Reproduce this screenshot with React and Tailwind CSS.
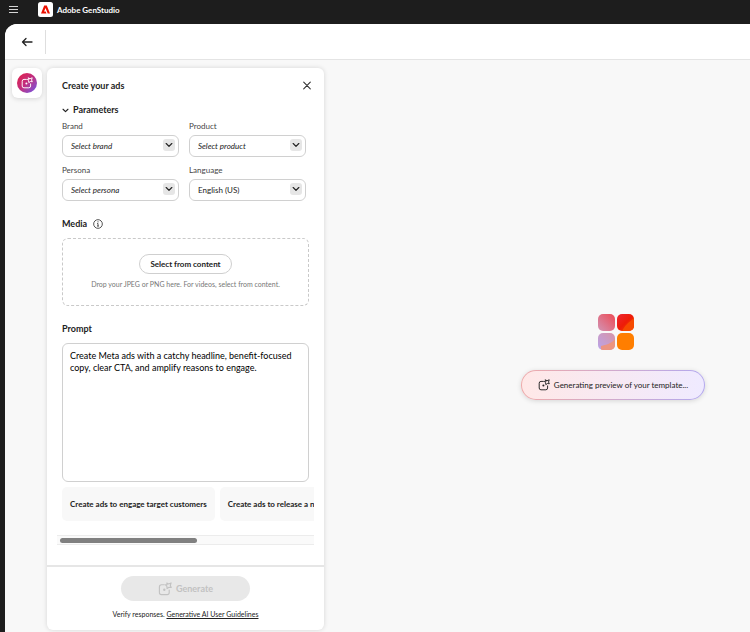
import React, { useState } from 'react';

function GenerateIcon({ className }) {
  return (
    <svg className={className} viewBox="0 0 20 20" fill="none" stroke="currentColor" strokeWidth="1.6" strokeLinecap="round" strokeLinejoin="round" aria-hidden="true">
      <path d="M9 4H5a3 3 0 0 0-3 3v8a3 3 0 0 0 3 3h8a3 3 0 0 0 3-3v-3.5" />
      <path d="M12.6 1.6l2.5 1.3 3.6-1.6-1.1 3.7 1.3 2.9-3.2-.4-2.7 1.9-.3-3.1-2.2-2.4 2.5-.1z" />
      <circle cx="9" cy="11" r="1.7" fill="currentColor" stroke="none" />
    </svg>
  );
}

function Chevron({ className }) {
  return (
    <svg className={className} viewBox="0 0 10 10" fill="none" stroke="currentColor" strokeWidth="1.6" strokeLinecap="round" strokeLinejoin="round" aria-hidden="true">
      <path d="M1.5 3.2L5 6.7l3.5-3.5" />
    </svg>
  );
}

const parameters = [
  { id: 'brand', label: 'Brand', options: ['Select brand'], placeholder: true },
  { id: 'product', label: 'Product', options: ['Select product'], placeholder: true },
  { id: 'persona', label: 'Persona', options: ['Select persona'], placeholder: true },
  { id: 'language', label: 'Language', options: ['English (US)'], placeholder: false }
];

const suggestions = [
  'Create ads to engage target customers',
  'Create ads to release a new product'
];

function ParameterSelect({ id, label, options, placeholder }) {
  return (
    <div>
      <label htmlFor={id} className="block text-[8px] leading-4 text-[#464646]">{label}</label>
      <div className="relative mt-px">
        <select
          id={id}
          className={`block w-full h-[22px] pl-2 pr-6 appearance-none rounded-md border border-[#d0d0d0] bg-white text-[8px] text-[#222] ${placeholder ? 'italic' : ''}`}
        >
          {options.map(option => <option key={option}>{option}</option>)}
        </select>
        <span className="absolute right-1 top-1 flex items-center justify-center size-3 rounded-[3px] bg-[#e6e6e6] text-[#292929] pointer-events-none">
          <Chevron className="size-2" />
        </span>
      </div>
    </div>
  );
}

function CreatePanel() {
  const [prompt, setPrompt] = useState(
    'Create Meta ads with a catchy headline, benefit-focused copy, clear CTA, and amplify reasons to engage.'
  );

  return (
    <section className="flex flex-col w-[277px] flex-none rounded-md bg-white shadow-[0_0_5px_rgba(0,0,0,0.14)]">
      <div className="flex-1 px-[15px] pt-2.5 pb-5">
        <div className="flex items-center justify-between">
          <h1 className="text-[9px] leading-4 font-bold">Create your ads</h1>
          <button type="button" aria-label="Close" className="-mr-1">
            <svg className="size-3" viewBox="0 0 12 12" fill="none" stroke="#333" strokeWidth="1.1" strokeLinecap="round">
              <path d="M2.7 2.2l6.6 6.6M9.3 2.2L2.7 8.8" />
            </svg>
          </button>
        </div>

        <button type="button" className="flex items-center gap-1 mt-2 text-[9px] leading-4 font-bold">
          <Chevron className="size-[7px]" />
          Parameters
        </button>

        <div className="grid grid-cols-2 gap-x-2.5 gap-y-[5px] mr-[3px]">
          {parameters.map(param => <ParameterSelect key={param.id} {...param} />)}
        </div>

        <div className="flex items-center gap-1.5 mt-[15px]">
          <h2 className="text-[9px] leading-4 font-bold">Media</h2>
          <svg className="size-2.5" viewBox="0 0 12 12" fill="none" stroke="#333" strokeWidth="1" aria-hidden="true">
            <circle cx="6" cy="6" r="5.2" />
            <path d="M5 5.4h1v3M4.8 8.5h2.4" />
            <circle cx="6" cy="3.4" r=".7" fill="#333" stroke="none" />
          </svg>
        </div>
        <div className="flex flex-col items-center mt-1.5 h-[68px] pt-[15px] rounded-md border border-dashed border-[#c9c9c9]">
          <button type="button" className="h-5 px-2.5 rounded-full border border-[#cfcfcf] text-[8px] leading-4 font-bold">
            Select from content
          </button>
          <p className="mt-1 text-[7px] leading-3 text-[#777]">Drop your JPEG or PNG here. For videos, select from content.</p>
        </div>

        <label htmlFor="prompt" className="block mt-[15px] text-[9px] leading-4 font-bold">Prompt</label>
        <textarea
          id="prompt"
          value={prompt}
          onChange={(e) => setPrompt(e.target.value)}
          className="block w-full h-[139px] mt-1.5 px-[7px] py-1.5 resize-none rounded-md border border-[#d0d0d0] text-[9px] leading-3 text-black"
        />

        <div className="-ml-[5px] -mr-[5px]">
          <div className="flex gap-[5px] pl-[5px] pt-[5px] overflow-hidden">
            {suggestions.map(text => (
              <button
                key={text}
                type="button"
                onClick={() => setPrompt(text)}
                className="flex-none h-[34px] px-2 rounded-[5px] bg-[#f8f8f8] text-[8px] leading-4 font-bold whitespace-nowrap"
              >
                {text}
              </button>
            ))}
          </div>
          <div className="flex items-center h-2.5 mt-3.5 px-[3px] border-y border-[#ececec] bg-[#fafafa]">
            <div className="w-[137px] h-[5px] rounded-full bg-[#808080]"></div>
          </div>
        </div>
      </div>

      <div className="flex flex-col items-center border-t-2 border-[#e6e6e6] pt-[9px] pb-2">
        <button type="button" disabled className="flex items-center justify-center gap-1 w-[129px] h-[25px] rounded-full bg-[#e8e8e8] text-[9px] font-bold text-[#c2c2c2]">
          <GenerateIcon className="size-3.5" />
          Generate
        </button>
        <p className="mt-[5px] text-[7px] leading-4 text-[#222]">
          Verify responses. <a href="#guidelines" className="underline">Generative AI User Guidelines</a>
        </p>
      </div>
    </section>
  );
}

function LoadingLogo() {
  return (
    <svg className="w-9 h-9 ml-[5px]" viewBox="0 0 36 36" aria-hidden="true">
      <defs>
        <linearGradient id="pink" x1="1" y1="0" x2="0" y2="1">
          <stop offset="0" stopColor="#ed4a55" />
          <stop offset="1" stopColor="#d294b4" />
        </linearGradient>
        <linearGradient id="red" x1="0" y1="0" x2="1" y2="1">
          <stop offset="0" stopColor="#ed2733" />
          <stop offset=".5" stopColor="#ee1c08" />
          <stop offset="1" stopColor="#f64b00" />
        </linearGradient>
        <linearGradient id="lilac" x1="1" y1="0" x2="0" y2="1">
          <stop offset="0" stopColor="#d893a6" />
          <stop offset="1" stopColor="#b9a4ea" />
        </linearGradient>
        <clipPath id="topRight"><rect x="19" width="17" height="17" rx="5" /></clipPath>
        <clipPath id="bottomLeft"><rect y="19" width="17" height="17" rx="5" /></clipPath>
      </defs>
      <rect width="17" height="17" rx="5" fill="url(#pink)" />
      <rect x="19" width="17" height="17" rx="5" fill="url(#red)" />
      <path d="M36 4C31 8 27 11 24 17h12z" fill="#f64a00" clipPath="url(#topRight)" />
      <rect y="19" width="17" height="17" rx="5" fill="url(#lilac)" />
      <path d="M17 25c-3 4-9 6-14 7v4h14z" fill="#ec9480" clipPath="url(#bottomLeft)" />
      <rect x="19" y="19" width="17" height="17" rx="5" fill="#ff7e00" />
    </svg>
  );
}

function App() {
  return (
    <div className="flex flex-col min-h-screen bg-[#1d1d1d] text-[#222] font-['Lato','Noto_Sans',sans-serif]">
      <header className="flex items-center h-6 pb-[5px] pl-[9px] text-white">
        <button type="button" aria-label="Menu">
          <svg className="w-[9px] h-[9px]" viewBox="0 0 9 9" stroke="#d5d5d5" strokeWidth="1">
            <path d="M0 1.5h9M0 4.5h9M0 7.5h9" />
          </svg>
        </button>
        <svg className="ml-5 w-[15px] h-[15px]" viewBox="0 0 15 15" aria-hidden="true">
          <rect width="15" height="15" rx="2.5" fill="#fff" />
          <path d="M3 11.5L6.2 3.5h2.6l3.2 8H9.7L7.5 6 6.1 9.5h1.6l.8 2z" fill="#eb1000" />
        </svg>
        <span className="ml-1 text-[8px] leading-4 font-bold">Adobe GenStudio</span>
      </header>

      <div className="flex flex-col flex-1 ml-[5px] rounded-tl-xl overflow-hidden bg-[#f8f8f8]">
        <div className="flex items-center h-9 pl-4 border-b border-[#e4e4e4] bg-white">
          <button type="button" aria-label="Back">
            <svg className="size-3" viewBox="0 0 12 12" fill="none" stroke="#222" strokeWidth="1.3" strokeLinecap="round" strokeLinejoin="round">
              <path d="M11 6H1.5M5 2.5L1.5 6 5 9.5" />
            </svg>
          </button>
          <div className="ml-3 w-px h-6 bg-[#dedede]"></div>
        </div>

        <main className="flex flex-1 pl-[7px] pt-2 pb-[3px]">
          <nav className="mr-[5px]">
            <button type="button" aria-label="Generate" className="flex items-center justify-center size-[30px] rounded-md bg-white shadow-[0_1px_5px_rgba(0,0,0,0.14)]">
              <span className="flex items-center justify-center size-5 rounded-full bg-linear-to-br from-[#e5173f] via-[#c02c80] to-[#6a48ee] text-white">
                <GenerateIcon className="size-3" />
              </span>
            </button>
          </nav>

          <CreatePanel />

          <div className="flex flex-col flex-1 items-center justify-center pl-[152px] pt-4">
            <LoadingLogo />
            <div role="status" className="mt-5 rounded-full p-px bg-linear-to-r from-[#eea9a9] to-[#b3a8ee] shadow-[0_1px_5px_rgba(0,0,0,0.14)]">
              <div className="flex items-center gap-1 h-7 px-4 rounded-full bg-linear-to-r from-[#ffe8e7] to-[#efeaff] text-[8px] whitespace-nowrap">
                <GenerateIcon className="size-3" />
                Generating preview of your template...
              </div>
            </div>
          </div>
        </main>
      </div>
    </div>
  );
}

export default App;
